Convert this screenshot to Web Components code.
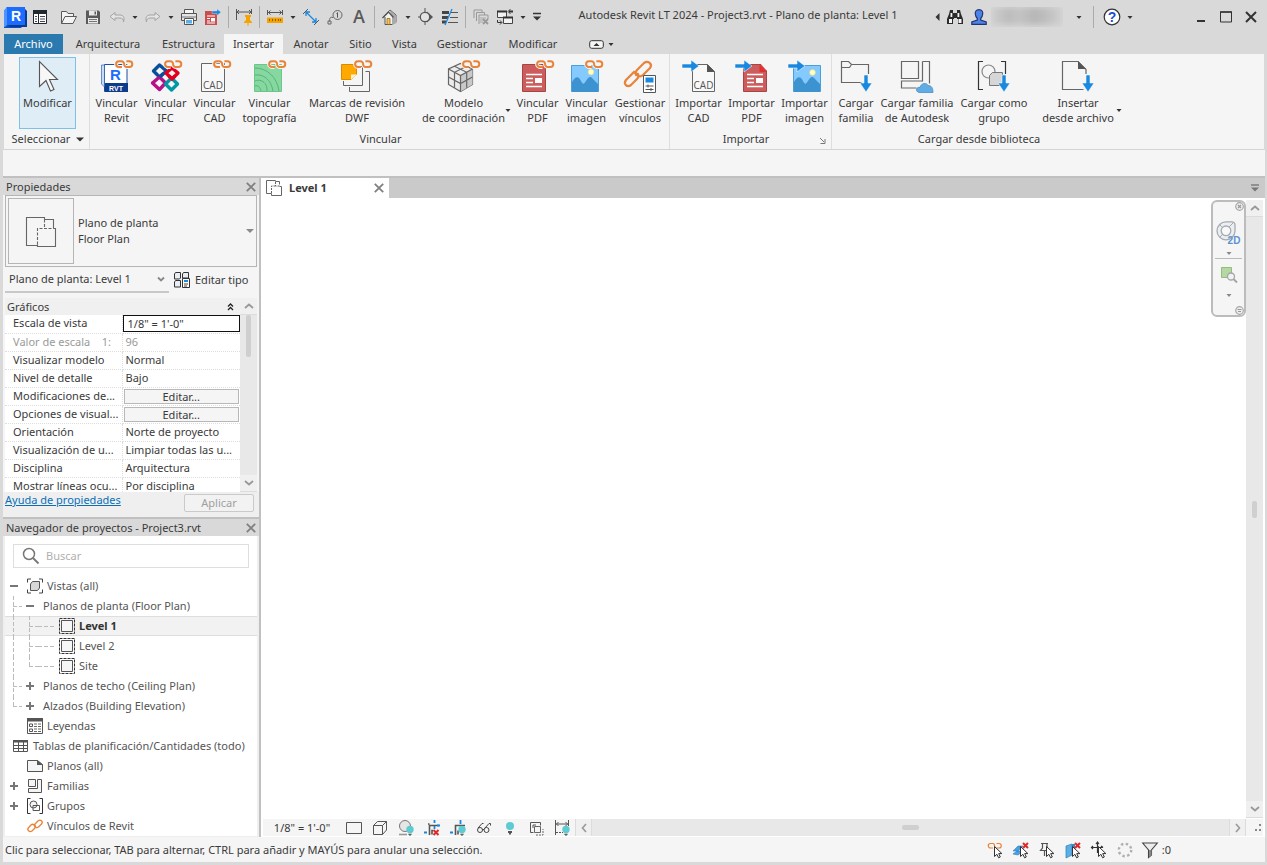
<!DOCTYPE html>
<html lang="es">
<head>
<meta charset="utf-8">
<title>Autodesk Revit LT 2024 - Project3.rvt</title>
<style>
html { height: 100%; }
body { margin: 0; min-height: 100%; background: #d9d9d9; color: #3a3a3a; font: 11px/16px "Noto Sans", "Open Sans", sans-serif; }
</style>
</head>
<body>
<rv-app></rv-app>
<script>
const LINK = '<g fill="none" transform="matrix(1 0 0 -1 0 8.2)"><path d="M20.500 1.200H18a2.900 2.900 0 0 0 0 5.800h2.400a2.800 2.800 0 0 0 2.700-2.900a2.800 2.800 0 0 1 2.700-2.900h2.600a2.900 2.900 0 0 1 0 5.800h-2.400" stroke="#f5f5f5" stroke-width="4"/><path d="M21 1.200h-3a2.900 2.900 0 0 0 0 5.800h2.400a2.800 2.800 0 0 0 2.700-2.900a2.800 2.800 0 0 1 2.700-2.900h2.600a2.900 2.900 0 0 1 0 5.800h-3" stroke="#e8833a" stroke-width="2"/></g>';
const IMPORT_ARROW = '<path d="M0 4h9V0l8 6-8 6V8H0z" fill="#1888e0" stroke="#f5f5f5" stroke-width=".6"/>';
const DOWN_ARROW = '<path d="M25 15h4v8h4l-6 9-6-9h4z" fill="#1888e0" stroke="#f5f5f5" stroke-width=".6"/>';
const CURSOR = '<path d="M7.500 4.500v10l2.400-2.200 1.700 3.500 1.700-.8-1.600-3.400h3.200z" fill="#fff" stroke="#333" stroke-width="1"/>';
const BULB = '<circle cx="12" cy="9.500" r="3.700" fill="#5ccbd2"/><path d="M10.300 13.700h3.400v1h-1v1h-1.400v-1h-1z" fill="#555"/>';
const PDF_PAGE = '<path d="M4.500 4.500h18l5 0v27h-23z" fill="#cd5c5c" stroke="#a94444"/><g stroke="#fff" stroke-width="1.400"><path d="M8 14.500h16M8 18.500h7M8 22.500h7M8 26.500h16"/></g><path d="M17 18h7v5h-7z" fill="#fff"/>';
const PICTURE = '<path d="M4.500 5.500h27v26h-27z" fill="#85caff" stroke="#4a9fd8"/><path d="M5 22c3-5 6-7 9-1 2 4 3 3 5 0s4-6 7-2l5 5v8H5z" fill="#3d93cf"/>';
const FLOOR = '<g fill="none" stroke="#666"><path d="M.5.5h9v1h4v3M.5.5v13h5"/><path d="M5.500 13.500v2h10v-9h-2" /><path d="M5.500 13v-7h5M9.500 2v4h4" stroke-dasharray="2 1"/></g>';

const ICONS = {
  caret: [8, 5, '<path d="M1.500 1h5L4 4z" fill="#333"/>'],
  caretNav: [8, 5, '<path d="M1.500 1h5L4 4z" fill="#888"/>'],
  caretGray: [8, 5, '<path d="M0 0h8L4 4z" fill="#8a8a8a"/>'],
  caretBig: [8, 5, '<path d="M0 .5h8L4 4.500z" fill="#333"/>'],
  caretLeft: [5, 8, '<path d="M4.500 0v8L.5 4z" fill="#333"/>'],
  chevronSmall: [8, 5, '<path d="M1 .5l3 3 3-3" fill="none" stroke="#888" stroke-width="1.800"/>'],
  chevronDown: [10, 6, '<path d="M1 1l4 3.500L9 1" fill="none" stroke="#999" stroke-width="1.800"/>'],
  chevronUp: [10, 6, '<path d="M1 5l4-3.500L9 5" fill="none" stroke="#999" stroke-width="1.800"/>'],
  chevronLeft: [6, 10, '<path d="M5 1L1.500 5 5 9" fill="none" stroke="#999" stroke-width="1.600"/>'],
  chevronRight: [6, 10, '<path d="M1 1l3.500 4L1 9" fill="none" stroke="#999" stroke-width="1.600"/>'],
  collapse: [7, 8, '<path d="M1 3.500L3.500 1 6 3.500M1 7l2.500-2.500L6 7" fill="none" stroke="#222" stroke-width="1.300"/>'],
  close: [10, 10, '<path d="M.8.8l8.400 8.400M9.200.8L.8 9.200" stroke="#808080" stroke-width="1.800"/>'],
  logo: [24, 24, '<path d="M0 6l3-4h17v18l-3 3H0z" fill="#0a4fc4"/><path d="M20 3l3 3v16H6l-2-2z" fill="#0b3a8f"/><path d="M3 2h18v18H3z" fill="#1a6dff"/><path d="M0 6l3-4v18l-2 2H0z" fill="#4f93ff"/><text x="12" y="16" text-anchor="middle" font-family="Liberation Sans" font-weight="700" font-size="14" fill="#fff">R</text>'],
  uiPanel: [16, 16, '<path d="M1.500 2h13v12.500h-13z" fill="#fff" stroke="#222831"/><path d="M1 1h14v4H1z" fill="#222831"/><path d="M6.500 5v10" stroke="#222831"/><path d="M3 7.500h2M3 10h2M3 12.500h2M8 7.500h5M8 10h5M8 12.500h5" stroke="#445"/>'],
  open: [16, 16, '<path d="M.5 14.500v-12h5l1.500 2h5.500v3M.5 14.500l3.500-7h11.500l-3.500 7z" fill="#f4f4f4" stroke="#5a5a5a"/>'],
  save: [16, 16, '<path d="M1 1.500h12.500l1.500 1.500v12H1z" fill="#5a5a5a"/><path d="M4 1.500h8v5H4z" fill="#e8e8e8"/><path d="M3 9h10v5.500H3z" fill="#e8e8e8"/><path d="M9.500 2.500h1.500v3H9.500z" fill="#5a5a5a"/><path d="M4 10.500h8M4 12.500h8" stroke="#777"/>'],
  undo: [16, 16, '<path d="M6 3.500L1 7.500l5 4v-2.500h5c2.500 0 3.500 1.500 3.500 4C16 8 14 6 11 6H6z" fill="#e4e4e4" stroke="#a3a3a3"/>'],
  redo: [16, 16, '<path d="M10 3.500l5 4-5 4V9H5c-2.500 0-3.500 1.500-3.500 4C0 8 2 6 5 6h5z" fill="#e4e4e4" stroke="#a3a3a3"/>'],
  print: [16, 16, '<path d="M3.500.5h9v4h-9z" fill="#f5f5f5" stroke="#555"/><path d="M.5 4.500h15v7h-15z" fill="#e6e6e6" stroke="#555"/><path d="M1 8h14" stroke="#777"/><path d="M3.500 9.500h9v6h-9z" fill="#fff" stroke="#555"/><path d="M5 11h6v3.500H5z" fill="#5eaee6"/>'],
  pdfExport: [16, 16, '<path d="M0 2h12v14H0z" fill="#c94f4f"/><path d="M2 7h8M2 9.500h3M2 12h3M2 14h8" stroke="#fff"/><path d="M6 9h4v3.500H6z" fill="#fff"/><path d="M7 2h5V0l4 3.200-4 3.300v-2H7z" fill="#1888e0" stroke="#d9d9d9" stroke-width=".4"/>'],
  dimPin: [18, 18, '<path d="M1.500 1v11M16.500 1v5M2 4h14" stroke="#555" fill="none"/><path d="M4 2L2 4l2 2M14 2l2 2-2 2" stroke="#555" fill="none"/><path d="M10 7h6v2h-1v3l2 2v1h-3.500v3h-1v-3H9v-1l2-2V9h-1z" fill="#f5a300"/>'],
  measure: [16, 16, '<path d="M.5 1v5M15.500 1v5M1 3.500h14M3.500 1.500l-2 2 2 2M12.500 1.500l2 2-2 2" fill="none" stroke="#555"/><path d="M0 8.500h16V14H0z" fill="#f5a300"/><path d="M2.500 10v2M5.500 10v2M8.500 10v2M11.500 10v2M13.500 10v2" stroke="#8a5a00"/>'],
  dimAligned: [18, 18, '<path d="M4 4l10 10M4 8V4h4M14 10v4h-4" fill="none" stroke="#1888e0" stroke-width="1.300"/><path d="M1 6l5-5M12 17l5-5" stroke="#555"/>'],
  tag: [16, 16, '<circle cx="10.500" cy="6" r="4.500" fill="none" stroke="#666"/><path d="M9.500 4.500l1-.8v5" fill="none" stroke="#555"/><path d="M6 8.500c-3-1-3.500 1-3.500 4" fill="none" stroke="#666"/><path d="M1 12h3v3H1z" fill="none" stroke="#666"/>'],
  letterA: [16, 20, '<text x="8" y="16" text-anchor="middle" font-family="Open Sans" font-weight="600" font-size="18" fill="#5a5a5a">A</text>'],
  house: [16, 16, '<path d="M1 8.500L8 1l6 5v7l-4 2.500H3V8" fill="#f2f2f2" stroke="#555"/><path d="M7.500 1L14.500 7v7L10 16V8z" fill="#aaa"/><path d="M.5 9L6.500 3l5 5.500" fill="none" stroke="#555" stroke-width="1.300"/><path d="M5 9.500h3v6H5z" fill="#f5c55a" stroke="#8a5a00" stroke-width=".7"/>'],
  section: [16, 18, '<path d="M9 3.500L15 9l-6 5.500z" fill="#555"/><circle cx="7" cy="9" r="4.700" fill="#e4e4e4" stroke="#555" stroke-width="1.300"/><path d="M7 0v4M7 14v3M0 9h2" stroke="#555"/>'],
  thin: [18, 16, '<path d="M1 3.500h7M1 8.500h6M1 13h4" stroke="#444" stroke-width="3"/><path d="M10 3.500h7M9 8.500h8M7 13.500h10" stroke="#555"/><path d="M4 16L11 0" stroke="#1888e0" stroke-width="1.300"/>'],
  closeInactive: [16, 16, '<path d="M1 9V1h8v2M3.500 12V3.500h8V6M6 15V6h9v4" fill="none" stroke="#999"/><path d="M7 9h6M7 11h4M7 13h3" stroke="#aaa"/><path d="M10 10l5 5M15 10l-5 5" stroke="#999" stroke-width="1.800"/>'],
  switchWin: [18, 16, '<path d="M1.500 2.500h9v6h-9zM7.500 8.500h9v6h-9z" fill="#f2f2f2" stroke="#444"/><path d="M1 2.500h10M7 8.500h10" stroke="#333" stroke-width="2"/><path d="M13 2.500h4M16 1v3M12 2.500l2-2v4zM1.500 11v2.500h4M4 11.500l2 2-2 2" fill="none" stroke="#333"/>'],
  customize: [10, 10, '<path d="M1 1.500h8" stroke="#333" stroke-width="1.500"/><path d="M1 4.500h8l-4 4z" fill="#333"/>'],
  binoculars: [18, 16, '<path d="M4 1h3v3h4V1h3l1 4 2 5v5h-5v-5h-1V9H8v1H7v5H1v-5l2-5z" fill="#2b2b2b"/><path d="M3 10h3v4H3zM12.500 10h3v4h-3zM4.500 4h1.800v4H4.500zM11.500 4h1.800v4h-1.800z" fill="#f4f4f4"/>'],
  user: [16, 16, '<path d="M8 .7c3 0 4 2 3.700 4.300-.2 2-1 3.500-2 4.500v1.500l5.500 2v2.300H.8V13l5.500-2V9.500c-1-1-1.800-2.500-2-4.500C4 2.700 5 .7 8 .7z" fill="#4d82e8" stroke="#22346e" stroke-width="1.200"/>'],
  help: [18, 18, '<circle cx="9" cy="9" r="7.800" fill="#fff" stroke="#333" stroke-width="1.200"/><text x="9" y="14" text-anchor="middle" font-family="Liberation Sans" font-weight="700" font-size="14" fill="#1b4fd0">?</text>'],
  winMin: [12, 12, '<path d="M2 10h8" stroke="#333" stroke-width="2"/>'],
  winMax: [12, 12, '<path d="M.5 1h11v10H.500z" fill="none" stroke="#333" stroke-width="1"/><path d="M0 1h12" stroke="#333" stroke-width="1.500"/>'],
  winClose: [12, 12, '<path d="M1 1l10 10M11 1L1 11" stroke="#333" stroke-width="2"/>'],
  minRibbon: [15, 9, '<rect x=".7" y=".7" width="13.600" height="7.600" rx="2" fill="#f5f5f5" stroke="#333"/><path d="M4.500 6L7.500 3l3 3z" fill="#333"/>'],
  modify: [32, 32, '<path d="M7.500 1.500v25l6.500-6 4.500 10.500 3.500-1.500-4.500-10h8z" fill="#f7f7f7" stroke="#555" stroke-width="1.100"/>'],
  linkRvt: [32, 32, '<path d="M3.500 4.500h22.500v27H3.500z" fill="#fff" stroke="#1b4fa5"/><path d="M3 23h24v9H4z" fill="#0f3c8a"/><path d="M.5 5h3v22l-3-3z" fill="#c8dcf8" stroke="#1b4fa5" stroke-width=".6"/><text x="14.500" y="20" text-anchor="middle" font-family="Liberation Sans" font-weight="700" font-size="15" fill="#1a6dff">R</text><text x="15" y="30.500" text-anchor="middle" font-family="Liberation Sans" font-weight="700" font-size="7" fill="#fff">RVT</text>' + LINK],
  linkIfc: [32, 32, '<g fill="none" stroke-width="3.400" stroke-linejoin="round"><path d="M9.500 5l7 6-7 6-6-6z" stroke="#0a4f9c"/><path d="M22 8l6 5-6 6-6-6z" stroke="#e2001f"/><path d="M9.500 17l6 6-6 6.500-7-6.500z" stroke="#b8108a"/><path d="M21.500 18l6 6-6 6-6-6z" stroke="#0097a7"/><path d="M9.500 17l4-3.500" stroke="#0a4f9c"/><path d="M19 16l3 3 3-3" stroke="#e2001f"/></g>' + LINK],
  linkCad: [32, 32, '<path d="M2.500 3.500h23v28h-23z" fill="#f8f8f8" stroke="#666"/><text x="14" y="29" text-anchor="middle" font-family="Open Sans" font-size="10" fill="#555">CAD</text>' + LINK],
  linkTopo: [32, 32, '<path d="M.5 4.500h27v27H.5z" fill="#86d7a0" stroke="#6cc58a"/><g fill="none" stroke="#56b57a"><path d="M1 21c4-2 9 0 11 4 1 2 1 4 1 6M1 15c8-1 16 4 18 16M1 8c12 0 22 9 24 23M1 26c3-1 5 1 6 5"/></g>' + LINK],
  linkDwf: [34, 32, '<path d="M9.500 27v4.500h20v-20h-4M3.500 21v4.500h19v-19h-4" fill="none" stroke="#666"/><path d="M1.500 4.500h15v10l-5 5h-10z" fill="#ffa800" stroke="#d98a00"/><path d="M11 20v-5.500h6z" fill="#fff3cf"/>' + LINK],
  linkModel: [32, 32, '<path d="M12.500 3.500L24.500 9v15.500l-12 7-12-7V9z" fill="#ececec" stroke="#666" stroke-width="1.200"/><path d="M12.500 15.500l12-6.500v15.500l-12 7z" fill="#c9c9c9"/><path d="M.5 9l12 6.500L24.500 9M12.500 15.500v16M.5 17l12 6.500 12-6.500M6.500 6.300l12.200 6v15.500M18.500 6.300l-12 6v15.500" fill="none" stroke="#666" stroke-width="1.200"/>' + LINK],
  linkPdf: [32, 32, '<g transform="translate(-4 0)">' + PDF_PAGE + '</g>' + LINK],
  linkImage: [32, 32, '<g transform="translate(-4 0)">' + PICTURE + '</g><circle cx="20" cy="12" r="3" fill="#ffffc8" stroke="#d8cf80" stroke-width=".6"/>' + LINK],
  manageLinks: [34, 34, '<g fill="none" stroke="#e8833a" stroke-width="2.200" stroke-linecap="round"><path d="M14 14l-3-2-8 8c-3 4 1 8 5 5l6-6c1-1 2-3 1-5"/><path d="M13 15c-1-2-1-3 1-5l7-7c4-3 9 1 6 5l-7 7c-2 2-4 2-6 0"/></g><path d="M20.500 15.500h12v17h-12z" fill="#fff" stroke="#555"/><path d="M22.500 17.500h8v5h-8z" fill="#1888e0"/><path d="M22.500 26h8M22.500 29.500h8M25 24.500v3M28 28v3" stroke="#555"/>'],
  importCad: [34, 32, '<path d="M10.500 4.500h15l7 7v20h-22z" fill="#f8f8f8" stroke="#666"/><path d="M25 4l8 8h-8z" fill="#555"/><text x="21.500" y="28.500" text-anchor="middle" font-family="Open Sans" font-size="10" fill="#555">CAD</text>' + IMPORT_ARROW],
  importPdf: [34, 32, '<g transform="translate(4 0)">' + PDF_PAGE + '</g><path d="M25 3h8v9z" fill="#f5f5f5"/><path d="M24.500 4l7.500 8h-7.500z" fill="#e03030"/>' + IMPORT_ARROW],
  importImage: [34, 32, '<g transform="translate(1 0)">' + PICTURE + '</g><circle cx="24.500" cy="12.500" r="3" fill="#ffffc8" stroke="#d8cf80" stroke-width=".6"/>' + IMPORT_ARROW],
  loadFamily: [34, 34, '<path d="M29.500 14V4.500h-17l-3-3h-7v21h20M2.500 7.500h8l2-3" fill="none" stroke="#666" stroke-width="1.200"/>' + DOWN_ARROW],
  loadAutodesk: [34, 34, '<path d="M1.500 1.500h17v17h-17zM22.500 1.500h7v22M22.500 1.500v19.500h-21v7h15" fill="none" stroke="#666" stroke-width="1.200"/><path d="M19 32.500c-4-1-3-6 1-5 1-5 7-5 8-2 4 0 5 3 5 7z" fill="#62ace6" stroke="#3d87c0" stroke-width=".7"/>'],
  loadGroup: [34, 34, '<path d="M6 1.500H1.500v28H6M24 1.500h4.500V14" fill="none" stroke="#333" stroke-width="1.200"/><circle cx="11.500" cy="11.500" r="6.500" fill="#f5f5f5" stroke="#888" stroke-width="1.200"/><path d="M12.500 15.500l3-3h10v10l-3 3h-10z" fill="#d6d6d6" stroke="#777"/>' + DOWN_ARROW],
  insertFile: [34, 34, '<path d="M25 14V9.500l-8-8H1.500v28h21" fill="none" stroke="#666" stroke-width="1.200"/><path d="M17 1l8 8h-8z" fill="#555"/>' + DOWN_ARROW],
  launcher: [6, 6, '<path d="M0 0l4 4M5 1v4.500H.500" fill="none" stroke="#777"/>'],
  floorPlanBig: [32, 32, '<g fill="none" stroke="#666" stroke-width="1.100"><path d="M19.500 4.500V2.500h-18v28h11M19.500 4.500h9v9"/><path d="M28.500 13.500h2v18h-18v-2"/><path d="M12.500 29.500v-16h16M19.500 4.500v9" stroke-dasharray="3 1.500"/></g>'],
  floorPlan: [16, 16, FLOOR],
  editType: [16, 16, '<path d="M.5 2l1-1.500h5V6l-1 1h-5zM8.500 2l1-1.500h5V6h-6zM.5 10l1-1.500h5V15h-6z" fill="#e8eef4" stroke="#333"/><path d="M8.500 6.500h7v9h-7z" fill="#fff" stroke="#333"/><path d="M10 8h4v2h-4z" fill="#1888e0"/><path d="M10 12h4M10 14h3" stroke="#444"/>'],
  search: [18, 18, '<circle cx="7" cy="7" r="5.500" fill="none" stroke="#777" stroke-width="1.500"/><path d="M11 11l5.500 5.500" stroke="#777" stroke-width="1.800"/>'],
  views: [16, 16, '<path d="M4 1H.5v3.500M12 1h3.500v3.500M4 15H.5v-3.500M12 15h3.500v-3.500" fill="none" stroke="#444"/><path d="M3.500 6l2-2.500h7V10l-2 2.500h-7z" fill="#d8d8d8" stroke="#555"/>'],
  planView: [16, 16, '<path d="M.5.5h15v15H.5z" fill="none" stroke="#333" stroke-dasharray="3 1"/><path d="M2.500 2.500h11v11h-11z" fill="#f6f6f6" stroke="#555"/>'],
  legend: [16, 16, '<path d="M.5.5h15v15H.5z" fill="#fff" stroke="#555"/><path d="M0 0h16v3.500H0z" fill="#555"/><path d="M2.500 6h3v2.500h-3zM2.500 11h3v2.500h-3z" fill="none" stroke="#555"/><path d="M7 6h3M11 6h3M7 8.500h3M11 8.500h3M7 11h3M11 11h3M7 13.500h3M11 13.500h3" stroke="#666"/>'],
  schedule: [16, 16, '<path d="M.5 2.500h14v11H.5z" fill="#fff" stroke="#555"/><path d="M0 2h15v2.500H0z" fill="#555"/><path d="M0 7.500h15M0 10.500h15M5.500 3v11M10.500 3v11" stroke="#555"/>'],
  sheet: [16, 16, '<path d="M.5 2.500h10l5 4v7H.5z" fill="#f5f5f5" stroke="#555"/><path d="M10 2l6 5h-6z" fill="#555"/>'],
  families: [16, 16, '<path d="M1.500 1.500h7v7h-7zM10.500 1.500h4v13h-13v-4h9z" fill="#f5f5f5" stroke="#555"/>'],
  groups: [16, 16, '<path d="M3.500.5h-3v15h3M12.500.5h3v15h-3" fill="none" stroke="#333"/><circle cx="6.500" cy="6.500" r="3.500" fill="#f5f5f5" stroke="#555"/><path d="M6 7.500h6.500v5H6z" fill="none" stroke="#555"/>'],
  rvtLinks: [16, 16, '<g fill="none" stroke="#e8833a" stroke-width="1.300" stroke-linecap="round"><path d="M7 7c-1-1-2-1-3 0l-2.500 2.700c-2 2.300 1 5 3.500 3.300l3-3c.7-.8.7-2 0-3"/><path d="M9 9.500c1 .5 2 0 3-1L14.500 6c2-2.500-1-5-3.300-3.200L8 6c-.8.8-.8 2 0 3"/></g>'],
  viewRect: [16, 16, '<path d="M.5 2.500h15v11H.5z" fill="#f5f5f5" stroke="#555"/>'],
  cube: [16, 16, '<path d="M1.500 5.500l4-4h9V10l-4 4.500h-9zM1.500 5.500h9l4-4M10.500 5.500v9" fill="#f5f5f5" stroke="#555"/>'],
  shadows: [16, 16, '<circle cx="7" cy="6" r="5.500" fill="#e6e6e6" stroke="#777"/><path d="M1 14.500h8" stroke="#999" stroke-width="1.600"/>' + BULB],
  cropOff: [16, 16, '<path d="M5.500 15V5.500H15M4 4h1.500M9 10.500h-1v4" fill="none" stroke="#555" stroke-width="1.600"/><path d="M10.500 0v3M0 12.500h3M13 5.500h3M10.500 6v3" stroke="#1888e0" stroke-width="1.800"/><path d="M9.500 10l5 5M14.500 10l-5 5" stroke="#e02828" stroke-width="2"/>'],
  cropShow: [16, 16, '<path d="M5.500 15V5.500H15M8 14.500v-4" fill="none" stroke="#555" stroke-width="1.600"/><path d="M10.500 0v4M0 12.500h3" stroke="#1888e0" stroke-width="1.800"/>' + BULB],
  glasses: [16, 16, '<g fill="none" stroke="#444"><circle cx="4" cy="10" r="2.500"/><circle cx="10.500" cy="10" r="2.500"/><path d="M6.500 9.500h1.500M2 8l4-4.500h1.500M9 8l4-4.500h1.500v2"/></g>'],
  bulb: [16, 16, '<circle cx="8" cy="6" r="4" fill="#5ccbd2"/><path d="M6 11h4v2H9v1.500H7V13H6z" fill="#555"/>'],
  temporary: [16, 16, '<path d="M2.500 12.500v-10h10v3M2.500 12.500h3M5 8V5h3" fill="none" stroke="#555"/><path d="M6.500 6.500h6v6h-6z" fill="none" stroke="#666"/><path d="M8 15h7V9" fill="none" stroke="#666" stroke-dasharray="2 1"/>'],
  constraints: [16, 16, '<path d="M1.500 0v15M14.500 0v6M2 4h12M4.500 2l-2 2 2 2M11.500 2l2 2-2 2" fill="none" stroke="#555"/><path d="M2 12.500h7" stroke="#555" stroke-dasharray="2 1"/>' + BULB],
  selLinks: [16, 16, '<path d="M6 6H3.500a2 2 0 0 1 0-4.500H6q1.500 0 1.500 2.200T9 6h3a2 2 0 0 0 0-4.500H9.500" fill="none" stroke="#e8833a" stroke-width="1.200"/>' + CURSOR],
  selUnderlay: [16, 16, '<path d="M0 9l5-5h5L5 9zM0 12l4-3h6l-5 4z" fill="#4a9fe0" stroke="#2b7cbc" stroke-width=".6"/>' + CURSOR + '<path d="M10 1l5 5M15 1l-5 5" stroke="#e02828" stroke-width="2"/>'],
  selPinned: [16, 16, '<path d="M2 1.500h7M3.500 2v4l-2 2.500h8L8 6V2M5.500 9v5" fill="none" stroke="#555" stroke-width="1.200"/>' + CURSOR],
  selFace: [16, 16, '<path d="M1 4l6-2v11l-6 3z" fill="#5eaee6" stroke="#2b7cbc" stroke-width=".7"/><path d="M7 2h3v10H7z" fill="#3d87c0"/>' + CURSOR + '<path d="M10 1l5 5M15 1l-5 5" stroke="#e02828" stroke-width="2"/>'],
  dragSel: [16, 16, '<path d="M6.500 0v11M0 5.500h12M5 2l1.500-2L8 2M2 4L.5 5.500 2 7M10 4l2 1.500" fill="none" stroke="#333" stroke-width="1.200"/>' + CURSOR],
  progress: [16, 16, '<circle cx="8" cy="8" r="6.200" fill="none" stroke="#b0b0b0" stroke-width="2.400" stroke-dasharray="2.400 2.470"/>'],
  filter: [16, 16, '<path d="M.7 1h14.600L9.500 8v5l-3 2.500V8z" fill="#ececec" stroke="#444" stroke-width="1.100"/><path d="M7 8h2.500v5L7 15z" fill="#888"/>'],
  tabMenu: [10, 8, '<path d="M1 1h8" stroke="#777" stroke-width="1.400"/><path d="M1 3.500h8L5 7.500z" fill="#777"/>'],
  navClose: [9, 9, '<circle cx="4.500" cy="4.500" r="3.800" fill="#eee" stroke="#a8a8a8" stroke-width="1.200"/><path d="M3 3l3 3M6 3L3 6" stroke="#999" stroke-width="1.200"/>'],
  navMore: [9, 9, '<circle cx="4.500" cy="4.500" r="3.800" fill="#eee" stroke="#a8a8a8" stroke-width="1.200"/><path d="M2.500 3.500h4M3 5.500h3" stroke="#999" stroke-width="1.200"/>'],
  wheel: [25, 24, '<path d="M10 .8h6a3 3 0 0 1 3 3V10a9 9 0 1 1-9-9.200z" fill="#eceef0" stroke="#a5abb2" stroke-width="1.300"/><circle cx="10" cy="9.800" r="4.800" fill="#f8f8f8" stroke="#a5abb2" stroke-width="1.300"/><path d="M4 16l3-3M13 6l4-4M4 4l3 3" stroke="#a5abb2"/><text x="18" y="23" text-anchor="middle" font-family="Liberation Sans" font-weight="700" font-size="10" fill="#5a93d0">2D</text>'],
  zoomRegion: [18, 18, '<path d="M1.500 1.500h10v10h-10z" fill="#b6d6a4" stroke="#8fbf78"/><circle cx="11" cy="10.500" r="3.500" fill="#eef3f7" stroke="#a5a5a5" stroke-width="1.300"/><path d="M13.500 13l3.500 3.500" stroke="#a5a5a5" stroke-width="2"/>'],
  grip: [10, 10, '<path d="M6 1h2v2H6zM2 6h2v2H2zM6 6h2v2H6z" fill="#888"/>'],
};

const RESET = '*{box-sizing:border-box}button,input,select{font:inherit;color:inherit;margin:0;padding:0;border:0;background:none;border-radius:0;line-height:inherit}button{display:flex;align-items:center;justify-content:center;cursor:default}';

function define(name, css, markup) {
  customElements.define(name, class extends HTMLElement {
    constructor() { super(); this.attachShadow({ mode: 'open' }); }
    connectedCallback() {
      const html = typeof markup === 'function' ? markup(this) : markup;
      this.shadowRoot.innerHTML = '<style>' + RESET + css + '</style>' + html;
    }
  });
}
const icon = n => `<rv-icon name="${n}"></rv-icon>`;

define('rv-icon', ':host{display:block;flex:none}svg{display:block;overflow:visible}', el => {
  const [w, h, body] = ICONS[el.getAttribute('name')];
  return `<svg width="${w}" height="${h}" viewBox="0 0 ${w} ${h}" aria-hidden="true">${body}</svg>`;
});

/* Square toolbar button; size="s" is a narrow menu arrow */
define('rv-tool', ':host{display:block;flex:none;width:24px}:host([size=s]){width:12px}:host([size=m]){width:16px}:host([size=l]){width:26px}button{width:100%;height:22px}',
  el => `<button type="button" aria-label="${el.getAttribute('label') || ''}">${icon(el.getAttribute('icon'))}</button>`);

define('rv-sep', ':host{display:flex;justify-content:center;flex:none;width:7px}i{width:1px;height:22px;background:#ababab}', '<i></i>');

const tool = (i, l, s) => `<rv-tool icon="${i}" label="${l}" ${s ? `size="${s}"` : ''}></rv-tool>`;
const SEP = '<rv-sep></rv-sep>';

define('rv-titlebar', `
:host{display:flex;align-items:center;height:34px;padding:0 2px 0 1px}
nav,.right{display:flex;align-items:center}
.gap{width:5px}
.small{width:3px}
h1{flex:1;margin:0;text-align:center;font:inherit;padding-bottom:4px;white-space:nowrap}
.name{width:72px;height:20px;margin-right:10px;overflow:hidden}
.name i{display:block;height:18px;background:linear-gradient(90deg,#cfcfcf,#bcbcbc 25%,#c4c4c4 40%,#b6b6b6 60%,#c0c0c0 80%,#d2d2d2);filter:blur(3px)}
.win{display:flex;gap:1px;padding-left:53px}
`, `<nav aria-label="Acceso rápido">${tool('logo', 'Revit')}${tool('uiPanel', 'Inicio')}<span class="gap"></span>
${tool('open', 'Abrir')}${tool('save', 'Guardar')}${tool('undo', 'Deshacer')}${tool('caret', 'Lista deshacer', 's')}${tool('redo', 'Rehacer')}${tool('caret', 'Lista rehacer', 's')}${tool('print', 'Imprimir')}${tool('pdfExport', 'PDF')}${SEP}${tool('dimPin', 'Restricciones')}${SEP}${tool('measure', 'Medir')}${tool('caret', 'Opciones de medir', 's')}${tool('dimAligned', 'Cota')}${tool('tag', 'Etiqueta')}${tool('letterA', 'Texto')}${SEP}${tool('house', 'Vista 3D')}${tool('caret', 'Opciones 3D', 's')}${tool('section', 'Sección')}${tool('thin', 'Líneas finas')}${SEP}${tool('closeInactive', 'Cerrar inactivas')}${tool('switchWin', 'Cambiar ventana')}${tool('caret', 'Ventanas', 's')}${tool('customize', 'Personalizar', 'm')}</nav>
<h1>Autodesk Revit LT 2024 - Project3.rvt - Plano de planta: Level 1</h1>
<div class="right">${tool('caretLeft', 'Contraer', 's')}${tool('binoculars', 'Buscar')}${tool('user', 'Usuario')}<span class="name"><i></i></span>${tool('caret', 'Cuenta', 's')}<span class="gap"></span>${SEP}<span class="small"></span>${tool('help', 'Ayuda')}${tool('caret', 'Menú de ayuda', 's')}
<div class="win">${tool('winMin', 'Minimizar')}${tool('winMax', 'Maximizar')}${tool('winClose', 'Cerrar')}</div></div>`);

const TABS = [['Archivo', 59], ['Arquitectura', 90], ['Estructura', 71], ['Insertar', 59], ['Anotar', 56], ['Sitio', 43], ['Vista', 45], ['Gestionar', 70], ['Modificar', 72]];
define('rv-tabs', `
:host{display:flex;height:20px;padding-left:1px}
button{height:20px;flex:none;width:var(--w)}
.file{background:#2a7ab0;color:#fff}
.on{background:#f5f5f5}
.more{width:auto;padding-left:20px;gap:3px}
`, TABS.map(([t, w], i) => `<button type="button" style="--w:${w}px" class="${i === 0 ? 'file' : i === 3 ? 'on' : ''}">${t}</button>`).join('') +
`<button type="button" class="more" aria-label="Minimizar cinta">${icon('minRibbon')}${icon('caret')}</button>`);

define('rv-command', `
:host{display:flex;flex:none;width:var(--w)}
button{width:100%;height:75px;margin-top:3px;padding:3px 0;position:relative;flex-direction:column;justify-content:flex-start;border:1px solid transparent;border-width:0 1px}
.art{height:35px}
span{display:block;white-space:nowrap;text-align:center;line-height:15px}
.arrow{position:absolute;right:0;top:51px}
:host([active]) button{height:72px;padding:2px 0;border:1px solid #7fc1e6;background:#deedf6}
`, el => `<button type="button"><div class="art">${icon(el.getAttribute('icon'))}</div>${el.getAttribute('label').split('|').map(s => `<span>${s}</span>`).join('')}${el.hasAttribute('menu') ? `<div class="arrow">${icon('caret')}</div>` : ''}</button>`);

define('rv-group', `
:host{display:flex;flex-direction:column;height:95px;border-right:1px solid #dedede;padding:0 0 0 2px;flex:none}
:host([last]){border:0}
.row{display:flex;justify-content:center;height:77px}
footer{display:flex;align-items:center;height:16px}
b{flex:1;font-weight:400;text-align:center}
rv-icon{margin-right:5px}
rv-icon.launch{margin:4px 5px 0 0}
`, el => `<div class="row"><slot></slot></div><footer><b>${el.getAttribute('name')}</b>${el.hasAttribute('menu') ? icon('caretBig') : ''}${el.hasAttribute('launcher') ? '<rv-icon class="launch" name="launcher"></rv-icon>' : ''}</footer>`);

const cmd = (i, l, w, x = '') => `<rv-command icon="${i}" label="${l}" style="--w:${w}px" ${x}></rv-command>`;
define('rv-ribbon', `
:host{display:flex;height:96px;margin:0 1px;background:#f5f5f5;border-bottom:1px solid #d4d4d4}
rv-group.first{width:86px}
`, `<rv-group class="first" name="Seleccionar" menu>${cmd('modify', 'Modificar', 57, 'active')}</rv-group>
<rv-group name="Vincular">${cmd('linkRvt', 'Vincular|Revit', 49)}${cmd('linkIfc', 'Vincular|IFC', 49)}${cmd('linkCad', 'Vincular|CAD', 49)}${cmd('linkTopo', 'Vincular|topografía', 61)}${cmd('linkDwf', 'Marcas de revisión|DWF', 114)}${cmd('linkModel', 'Modelo|de coordinación', 99, 'menu')}${cmd('linkPdf', 'Vincular|PDF', 49)}${cmd('linkImage', 'Vincular|imagen', 49)}${cmd('manageLinks', 'Gestionar|vínculos', 58)}</rv-group>
<rv-group name="Importar" launcher>${cmd('importCad', 'Importar|CAD', 53)}${cmd('importPdf', 'Importar|PDF', 53)}${cmd('importImage', 'Importar|imagen', 53)}</rv-group>
<rv-group name="Cargar desde biblioteca" last>${cmd('loadFamily', 'Cargar|familia', 44)}${cmd('loadAutodesk', 'Cargar familia|de Autodesk', 78)}${cmd('loadGroup', 'Cargar como|grupo', 76)}${cmd('insertFile', 'Insertar|desde archivo', 92, 'menu')}</rv-group>`);

define('rv-scrollbar', `
:host{display:flex;background:#e8e8e8;flex:none}
:host([dir=v]){flex-direction:column;width:17px}
:host([dir=h]){height:17px}
button{width:17px;height:17px;flex:none;background:#f0f0f0;border:0 solid #dcdcdc}
:host([dir=v]) button{border-width:0 0 1px}
:host([dir=h]) button{border-width:0 1px}
.track{flex:1;display:flex;justify-content:center;align-items:center}
:host([start]) .track{align-items:flex-start}
i{background:#cfcfcf;border-radius:2px;width:5px;height:17px}
:host([dir=h]) i{width:17px;height:5px}
:host([start]) i{height:42px}
`, el => {
  const v = el.getAttribute('dir') === 'v';
  return `<button type="button" aria-label="Atrás">${icon(v ? 'chevronUp' : 'chevronLeft')}</button><div class="track"><i></i></div><button type="button" aria-label="Adelante">${icon(v ? 'chevronDown' : 'chevronRight')}</button>`;
});

define('rv-panel', `
:host{display:flex;flex-direction:column;background:#efefef}
header{display:flex;justify-content:space-between;align-items:center;height:17px;padding:0 3px;background:#d9d9d9;white-space:nowrap}
h2{margin:0;font:inherit}
`, el => `<header><h2>${el.getAttribute('name')}</h2><button type="button" aria-label="Cerrar panel">${icon('close')}</button></header><slot></slot>`);

const PROPS = [
  ['Escala de vista', 'select', '1/8" = 1\'-0"'], ['Valor de escala&nbsp;&nbsp;&nbsp; 1:', 'off', '96'],
  ['Visualizar modelo', '', 'Normal'], ['Nivel de detalle', '', 'Bajo'],
  ['Modificaciones de...', 'button', 'Editar...'], ['Opciones de visual...', 'button', 'Editar...'],
  ['Orientación', '', 'Norte de proyecto'], ['Visualización de u...', '', 'Limpiar todas las u...'],
  ['Disciplina', '', 'Arquitectura'], ['Mostrar líneas ocu...', '', 'Por disciplina']];
define('rv-properties', `
:host{display:block;padding:0 2px;background:#f5f5f5}
.type{width:100%;height:72px;justify-content:flex-start;padding:2px;border:1px solid #b5b5b5;text-align:left;gap:4px}
.thumb{display:flex;align-items:center;justify-content:center;width:66px;height:66px;border:1px solid #b5b5b5}
.type>span{flex:1}
.filter{display:flex;align-items:center;height:31px;padding-bottom:5px}
.combo{display:flex;align-items:center;width:164px;height:26px;border-bottom:2px solid #c8c8c8;padding:0 4px}
.combo select{appearance:none;flex:1;min-width:0}
.edit{gap:5px;padding-left:5px}
.grid{display:flex;height:194px;overflow:hidden;background:#fff}
.cells{flex:1;min-width:0}
.head{display:flex;align-items:center;justify-content:space-between;height:17px;padding:0 6px 0 2px;background:#f0f0f0}
table{width:100%;border-collapse:collapse;table-layout:fixed}
tr{height:18px}
th,td{padding:0 0 2px;height:18px;border-bottom:1px dotted #ddd;font-weight:400;text-align:left;white-space:nowrap;line-height:15px}
th{width:117px;padding-left:8px;border-right:1px dotted #ddd}
td{padding-left:3px}
td.ctl{padding:0}
td select{appearance:none;display:block;width:100%;height:17px;border:1px solid #111;padding-left:4px;line-height:15px;background:#fff}
td button{width:calc(100% - 2px);height:15px;margin:1px;border:1px solid #b8b8b8;background:#f5f5f5}
.off{color:#9a9a9a}
footer{display:flex;justify-content:space-between;height:25px;background:#efefef;margin:0 -2px;padding:0 5px 0 2px}
footer a{color:#0b6fb8}
footer button{width:70px;height:18px;margin-top:2px;border:1px solid #cacaca;border-radius:2px;color:#a0a0a0;background:#f2f2f2}
`, `<button type="button" class="type"><span class="thumb" style="flex:none">${icon('floorPlanBig')}</span><span>Plano de planta<br>Floor Plan</span>${icon('caretGray')}</button>
<div class="filter"><label class="combo"><select aria-label="Filtro"><option>Plano de planta: Level 1</option></select>${icon('chevronSmall')}</label><button type="button" class="edit">${icon('editType')}Editar tipo</button></div>
<div class="grid"><div class="cells"><div class="head">Gráficos${icon('collapse')}</div><table>${PROPS.map(([n, k, v]) => `<tr class="${k}"><th scope="row">${n}</th>${k === 'select' ? `<td class="ctl"><select aria-label="${n}"><option>${v}</option></select></td>` : k === 'button' ? `<td class="ctl"><button type="button">${v}</button></td>` : `<td>${v}</td>`}</tr>`).join('')}</table></div><rv-scrollbar dir="v" start></rv-scrollbar></div>
<footer><a href="#ayuda">Ayuda de propiedades</a><button type="button" disabled>Aplicar</button></footer>`);

/* Tree rows: the first string holds one indent cell per character (see CELL) */
const TREE = [
  ['-', 'views', 'Vistas (all)'], ['t-', '', 'Planos de planta (Floor Plan)'],
  ['vth', 'planView', 'Level 1', 'sel'], ['vth', 'planView', 'Level 2'], ['vlh', 'planView', 'Site'],
  ['t+', '', 'Planos de techo (Ceiling Plan)'], ['l+', '', 'Alzados (Building Elevation)'],
  [' ', 'legend', 'Leyendas'], ['', 'schedule', 'Tablas de planificación/Cantidades (todo)', 'flush'], [' ', 'sheet', 'Planos (all)'],
  ['+', 'families', 'Familias'], ['+', 'groups', 'Grupos'], [' ', 'rvtLinks', 'Vínculos de Revit']];
const CELL = { v: 'v', t: 'v h', l: 'v half h', h: 'dash', ' ': '', '+': 'plus', '-': 'minus' };
define('rv-tree', `
:host{display:block;flex:1;margin:0 2px 1px;background:#fff;padding-top:8px;color:#555}
.search{display:flex;align-items:center;height:24px;margin:0 8px 8px;border:1px solid #dedede;padding-left:8px;gap:6px}
.search input{flex:1;min-width:0;outline:0}
.search input::placeholder{color:#b0b0b0;opacity:1}
ul{list-style:none;margin:0;padding:0}
li{display:flex;align-items:center;height:20px;border:1px solid transparent;border-width:1px 0;padding-left:1px;white-space:nowrap}
li.sel{background:#f2f2f2;border-color:#dedede;font-weight:700;color:#333}
i{width:16px;height:20px;flex:none;background-repeat:no-repeat}
.v{background-image:repeating-linear-gradient(#bbb 0 4px,transparent 4px 6px);background-size:1px 100%;background-position:7px 0}
.v.h{background-image:repeating-linear-gradient(#bbb 0 4px,transparent 4px 6px),repeating-linear-gradient(90deg,#bbb 0 4px,transparent 4px 6px);background-size:1px 100%,9px 1px;background-position:7px 0,7px 10px}
.v.half{background-size:1px 10px,9px 1px}
.dash{background-image:repeating-linear-gradient(90deg,#bbb 0 4px,transparent 4px 6px);background-size:16px 1px;background-position:0 10px}
.minus,.plus{background-image:linear-gradient(#777,#777);background-size:8px 2px;background-position:4px 9px}
.plus{background-image:linear-gradient(#777,#777),linear-gradient(#777,#777);background-size:8px 2px,2px 8px;background-position:4px 9px,7px 6px}
rv-icon{margin:0 4px 0 5px}
.search rv-icon{margin:0}
.flush rv-icon{margin-left:7px}
.bare{padding-left:5px}
`, `<label class="search">${icon('search')}<input type="search" placeholder="Buscar" aria-label="Buscar"></label>
<ul role="tree">${TREE.map(([c, ic, t, k]) => `<li role="treeitem" class="${k || ''}">${[...c].map(x => `<i class="${CELL[x]}"></i>`).join('')}${ic ? icon(ic) + `<span>${t}</span>` : `<span class="bare">${t}</span>`}</li>`).join('')}</ul>`);

define('rv-navbar', `
:host{display:flex;flex-direction:column;align-items:center;width:35px;height:117px;border:2px solid #bcbcbc;border-radius:6px;background:#f5f5f5}
button{width:31px}
.tiny{height:9px;justify-content:flex-end}
.wheel{height:37px;padding-top:6px}
.small{height:10px}
.zoom{height:24px}
.menu{height:16px}
hr{width:27px;margin:0 0 4px;border:0;border-top:1px solid #bbb}
.end{margin-top:auto}
`, `<button type="button" class="tiny" aria-label="Cerrar">${icon('navClose')}</button><button type="button" class="wheel" aria-label="Rueda de navegación">${icon('wheel')}</button><button type="button" class="small" aria-label="Opciones de rueda">${icon('caretNav')}</button><hr>
<button type="button" class="zoom" aria-label="Zoom">${icon('zoomRegion')}</button><button type="button" class="menu" aria-label="Opciones de zoom">${icon('caretNav')}</button><button type="button" class="tiny end" aria-label="Personalizar">${icon('navMore')}</button>`);

define('rv-viewport', `
:host{display:flex;flex-direction:column;flex:1;min-width:0;background:#fff}
.tabs{display:flex;align-items:center;justify-content:space-between;height:20px;background:#cacaca;padding-right:5px}
.tab{display:flex;align-items:center;width:128px;height:20px;background:#fff;padding:0 5px;gap:7px}
.tab b{flex:1}
.canvas{flex:1;display:flex;justify-content:flex-end;position:relative;padding:2px 2px 1px 0}
rv-navbar{position:absolute;right:19px;top:2px}
.bar{display:flex;align-items:center;height:17px;margin:0 2px 1px;background:#f5f5f5}
.scale{width:78px}
rv-scrollbar[dir=h]{flex:1}
.corner{display:flex;justify-content:flex-end;align-items:center;width:17px}
`, `<div class="tabs"><div class="tab">${icon('floorPlan')}<b>Level 1</b><button type="button" aria-label="Cerrar vista">${icon('close')}</button></div><button type="button" aria-label="Lista de vistas">${icon('tabMenu')}</button></div>
<div class="canvas"><rv-navbar></rv-navbar><rv-scrollbar dir="v"></rv-scrollbar></div>
<div class="bar"><button type="button" class="scale">1/8" = 1'-0"</button>${[['viewRect', 'Detalle'], ['cube', 'Estilo visual'], ['shadows', 'Sombras'], ['cropOff', 'Recortar'], ['cropShow', 'Mostrar recorte'], ['glasses', 'Ocultar temporalmente'], ['bulb', 'Mostrar ocultos'], ['temporary', 'Propiedades temporales'], ['constraints', 'Mostrar restricciones']].map(([i, l]) => tool(i, l, 'l')).join('')}<rv-scrollbar dir="h"></rv-scrollbar><div class="corner">${icon('grip')}</div></div>`);

define('rv-status', `
:host{display:flex;align-items:center;justify-content:space-between;height:25px;background:#f5f5f5;padding:0 94px 0 2px}
div{display:flex;align-items:center}
p{margin:0}
`, `<p>Clic para seleccionar, TAB para alternar, CTRL para añadir y MAYÚS para anular una selección.</p><div>${[['selLinks', 'Seleccionar vínculos'], ['selUnderlay', 'Seleccionar subyacentes'], ['selPinned', 'Seleccionar bloqueados'], ['selFace', 'Seleccionar por cara'], ['dragSel', 'Arrastrar al seleccionar'], ['progress', 'Procesos']].map(([i, l]) => tool(i, l, 'l')).join('')}${tool('filter', 'Filtro')}<span>:0</span></div>`);

define('rv-app', `
:host{display:flex;flex-direction:column;box-sizing:border-box;min-height:100vh;padding:0 2px 3px 3px}
.options{height:28px;background:#f5f5f5;border-bottom:2px solid #c0c0c0}
main{display:flex;flex:1}
aside{display:flex;flex-direction:column;flex:none;width:258px;border-right:2px solid #c0c0c0}
.props{border-bottom:2px solid #c0c0c0}
.browser{flex:1}
`, `<rv-titlebar></rv-titlebar><rv-tabs></rv-tabs><rv-ribbon></rv-ribbon><div class="options"></div>
<main><aside><rv-panel class="props" name="Propiedades"><rv-properties></rv-properties></rv-panel><rv-panel class="browser" name="Navegador de proyectos - Project3.rvt"><rv-tree></rv-tree></rv-panel></aside><rv-viewport></rv-viewport></main>
<rv-status></rv-status>`);
</script>
</body>
</html>
